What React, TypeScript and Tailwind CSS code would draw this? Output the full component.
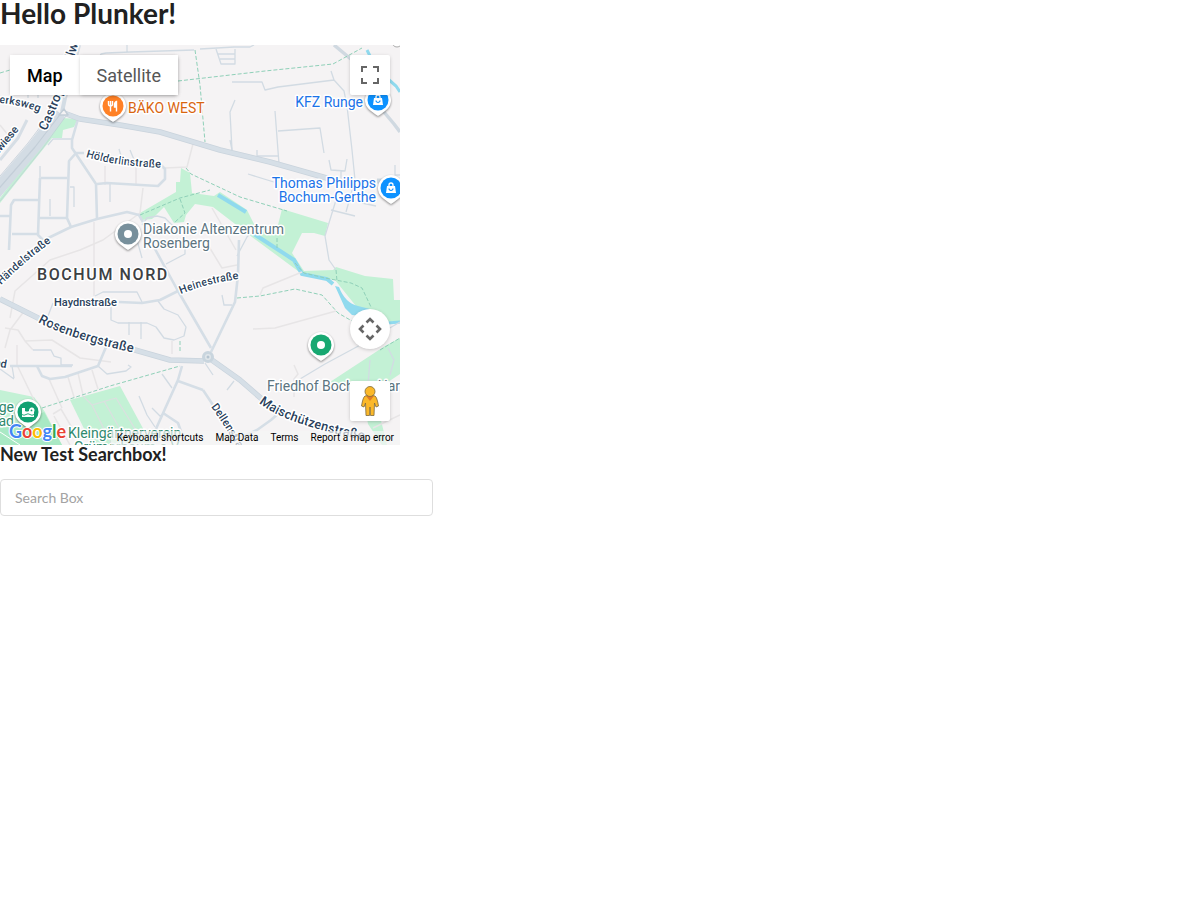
const minorRoads = [
  "M99 58 L101 54 L106 53 L130 52 L194 50 M127 45 V53 M200 49 L234 47 L250 47 L254 45",
  "M216 49 L221 64 H235 V49 M218 54 H235 M220 59 H235",
  "M232 82 H262 L265 90 L278 87 L334 80 L331 71 M334 80 L344 91 L347 106 L352 150 L355 180 L346 212",
  "M235 100 L230 112 L232 150 M275 111 L279 164 M278 131 L320 128 L324 153",
  "M230 140 L232 150 M257 150 V156 H279 M329 160 L331 170 L345 171 L347 159 M341 171 V180",
  "M248 174 L277 183 M336 200 L325 236 L329 260 L336 270 M331 210 L355 216 M395 165 V175 H400 M362 203 L376 206",
  "M28 92 V98 M38 92 V98",
  "M40 166 V178 M50 199 V216 M70 187 H74 V207 M110 184 V202 M119 149 L121 156 M130 150 L135 162",
  "M48 145 L53 139 H72",
  "M95 296 L103 292 H137 L142 302 M53 303 L48 316 M111 304 V320 L118 323 H147 L156 327 L164 338 L174 340 L184 336 L186 327 L178 315 L164 309 L158 301 M129 322 V335 M141 322 V339",
  "M166 264 L185 254 V246 M137 240 L142 258 M237 256 L247 237 L253 230",
  "M222 295 L224 305 H232 M0 369 L14 379 M12 366 L14 378",
  "M33 350 H51 L54 356 L61 358 V365 H73 M98 366 L107 374 L126 371 L131 367 L128 365",
  "M162 374 L172 388 M139 396 L147 415 L155 427 M152 408 L160 416 L165 413",
  "M234 381 L227 390 M205 363 L213 375",
  "M142 225 L147 218 L157 216 L165 218 L177 230 M177 238 V244",
  "M280 391 L325 364 L364 343 L400 322 M368 385 L370 360 M390 375 L394 360 L388 348",
];

const faintRoads = [
  "M25 310 L10 330 L5 348 M5 328 L18 330 L25 341 L33 350 M25 341 L52 340 L80 358 L111 362",
  "M10 318 L15 291 L50 260 L80 250 L103 240 L140 213 L143 188",
  "M94 296 V222 M105 166 V185 M136 165 V186 M165 168 L187 167 L194 140",
  "M17 345 V365 L35 402 M49 379 L62 408 M68 377 L74 397 M78 373 L83 395 M92 370 L98 389",
  "M53 414 L61 409 L82 445 M54 416 L70 445",
  "M212 208 L236 250 M208 245 L222 268 L237 265 M260 295 L263 288 L302 272 M253 329 L275 328 L336 311",
  "M172 341 V354 M294 365 L298 374 L294 379 V397 M373 428 L400 415 M0 125 L12 140",
];

const localRoads = [
  "M78 119 L72 140 V148 L96 184 L97 219",
  "M84 153 H76 L69 161 L67 218 L71 227",
  "M97 184 L107 183 L158 186 L165 179 V169 L160 164",
  "M41 178 H67 M40 178 L38 235 L43 240 M38 218 H67",
  "M38 200 H14 L11 205 L9 250 M0 216 H10 M12 234 H38",
  "M42 241 L71 227 L97 219 L127 212 L139 215 L143 222",
  "M119 302 L142 303 L160 300 L178 291 L180 289",
  "M10 366 H72 M37 366 L42 376 L50 379 L65 377 L98 366 L106 347",
  "M155 249 L178 291 L211 348",
  "M239 240 L238 275 L235 302 L211 352",
  "M182 366 L178 380 L155 431 M178 381 L203 390 M163 413 L178 423 L184 440",
  "M203 390 L213 405 M233 441 L257 430 L271 420 L280 412",
];

const mainRoads = [
  "M64 113 L80 119 L120 125 L160 132 L220 150 L270 162 L330 179",
  "M0 299 L38 318 L90 340 L135 350 L170 360 L204 361",
  "M209 358 L240 380 L263 400 L285 415",
];

const paths = [
  "M0 73 L10 70 M178 81 L265 71 L333 64 L362 48",
  "M195 50 L200 85 L205 142",
  "M42 408 L110 386 L180 366",
  "M186 168 L191 174 L240 197 L287 211",
  "M140 215 L180 198 L210 190 M180 199 L185 213 L175 222",
  "M237 298 L260 296 L295 289 L322 295 L338 313 L352 321",
  "M277 238 V250 M336 270 L337 281 M295 263 L304 273 L325 278 L351 283 L362 288 L371 307",
  "M380 350 L400 338",
  "M180 341 V352",
];

const pins = [
  { x: 113, y: 106, color: "#ff8126", glyph: "food" },
  { x: 378, y: 100, color: "#0d92ff", glyph: "bag" },
  { x: 391, y: 188, color: "#0d92ff", glyph: "bag" },
  { x: 128, y: 234, color: "#78909c", glyph: "dot" },
  { x: 321, y: 345, color: "#18a871", glyph: "dot" },
  { x: 28, y: 412, color: "#12a172", glyph: "swim" },
];

const footerItem = "bg-[#f5f5f5]/70 px-[6px]";

const Glyph = ({ name }: { name: string }) => {
  if (name === "food") {
    return (
      <g fill="none" stroke="#fff" strokeWidth="1.4">
        <path d="M-4.5 -5 V-2 Q-4.5 0 -2.5 0 Q-0.5 0 -0.5 -2 V-5 M-2.5 -5 V5.5" />
        <path d="M3.5 5.5 V-4.5 Q1 -4 1.5 1 H3.5" fill="#fff" />
      </g>
    );
  }
  if (name === "bag") {
    return (
      <g>
        <path d="M-4 -2 H4 L5 5 H-5 Z" fill="#fff" />
        <path d="M-2 -2 V-3 A2 2 0 0 1 2 -3 V-2" fill="none" stroke="#fff" strokeWidth="1.3" />
        <path d="M-2 0.5 A2 2 0 0 0 2 0.5" fill="none" stroke="#0d92ff" strokeWidth="1.2" />
      </g>
    );
  }
  if (name === "swim") {
    return (
      <g>
        <path d="M-6 -4 H-3 V-1 Q-1 0 1 -1 A2.8 2.8 0 1 1 6 0 V5 H-6 Z" fill="#fff" />
        <circle cx="3.5" cy="-1.6" r="0.9" fill="#12a172" />
        <path d="M-6 2.5 Q-4 4 -2 2.5 T2 2.5 T6 2.5" fill="none" stroke="#12a172" strokeWidth="0.9" />
      </g>
    );
  }
  return <circle r="4" fill="#fff" />;
};

const MapCanvas = () => {
  return (
    <svg
      viewBox="0 45 400 400"
      className="block h-full w-full font-['Roboto',sans-serif]"
      role="img"
      aria-label="Map of Bochum Nord"
    >
      <rect y="45" width="400" height="400" fill="#f5f3f4" />

      {/* parks */}
      <g fill="#c3f1d5">
        <path d="M62 118 L78 119 L74 127 L63 130 L62 138 L52 138 L0 203 V198 L40 145 Z" />
        <path d="M181 168 L190 173 L192 193 L214 196 L220 192 L247 210 L256 228 L277 229 L282 209 L328 223 L325 236 L314 233 L302 233 L292 253 L304 271 L333 270 L336 267 L365 276 L393 279 L394 300 L400 300 V323 L368 321 L335 280 L302 274 L252 237 L213 207 L195 204 L186 215 L184 222 L174 223 L164 207 L152 219 L141 220 L140 213 L176 192 V182 H180 Z" />
        <path d="M70 400 L120 386 L152 445 H92 Z" />
        <path d="M330 382 L385 346 L400 338 V374 L388 382 L376 400 L387 445 H382 L368 424 L362 391 Z" />
        <path d="M0 390 L34 397 L45 412 L62 445 H0 Z" />
      </g>
      <path d="M0 428 L18 424 L44 412 L62 445 H0 Z" fill="#a9e9c4" />
      <path d="M0 432 L20 445" fill="none" stroke="#fff" />

      {/* water */}
      <g fill="none" stroke="#90daee">
        <path d="M218 195 L246 212" strokeWidth="4" />
        <path d="M254 234 L294 260 L302 274 L327 279 L333 284" strokeWidth="4" />
        <path d="M367 50 L371 58 M388 79 L396 86 L400 92 M388 323 L400 322" strokeWidth="3" />
      </g>
      <path d="M335 286 L339 287 Q345 303 358 306 L370 309 L362 316 L352 315 L345 308 Z" fill="#90daee" />

      {/* streets */}
      <g fill="none" strokeLinejoin="round">
        <g stroke="#e7e5e6" strokeWidth="1.5">
          {faintRoads.map((d) => (
            <path key={d} d={d} />
          ))}
        </g>
        <g stroke="#d2dbe3" strokeWidth="1.3">
          {minorRoads.map((d) => (
            <path key={d} d={d} />
          ))}
        </g>
        <g stroke="#d5dee6" strokeWidth="2.6">
          {localRoads.map((d) => (
            <path key={d} d={d} />
          ))}
        </g>
        <path d="M334 45 L352 60 M384 112 L394 124 L400 132" stroke="#d0d9e1" strokeWidth="3.5" />
        <path d="M79 45 L65 98 L62 112" stroke="#d3dce4" strokeWidth="4" />
        <path d="M27 120 L18 138 L0 160" stroke="#d6dee5" strokeWidth="3" />
        <path d="M60 113 L34 147 L-5 193" stroke="#d3dce4" strokeWidth="13" />
        <path d="M62 112 L35 147 L-5 193" stroke="#c3ced8" strokeWidth="1.2" />
        <path d="M66 116 L42 149 L0 201 M53 110 L28 143 L-5 182" stroke="#c3ced8" strokeWidth="0.8" />
        <g stroke="#c9d3dc" strokeWidth="5.6">
          {mainRoads.map((d) => (
            <path key={d} d={d} />
          ))}
        </g>
        <g stroke="#d6dfe7" strokeWidth="4.2">
          {mainRoads.map((d) => (
            <path key={d} d={d} />
          ))}
        </g>
        <path d="M377 181 H400" stroke="#ccd8e1" strokeWidth="5" />
        <path d="M83 396 L92 405 L116 398 L140 437 M92 405 L112 445 M104 401 L121 431" stroke="#dcdfe0" strokeWidth="1.2" />
        <circle cx="208" cy="357" r="4.5" fill="#e0e6ea" stroke="#c9d5de" strokeWidth="3" />
        <circle cx="208" cy="357" r="1.5" fill="#b5c4d0" />
        <path d="M59 115 L64 109 L68 115 Z" fill="#f5f3f4" stroke="#c3ced8" strokeWidth="1.5" />
        <g stroke="#8fd0b8" strokeDasharray="4 2">
          {paths.map((d) => (
            <path key={d} d={d} />
          ))}
        </g>
      </g>
      <circle cx="397" cy="42" r="5" fill="#fff" stroke="#aaa" />

      {/* street names */}
      <defs>
        <path id="werksweg" d="M-9 103 Q16 102 46 115" />
        <path id="hoelderlin" d="M86 157 Q118 167 170 168" />
        <path id="heine" d="M181 294 Q207 283 245 278" />
        <path id="rosenberg" d="M38 322 Q68 339 140 354" />
        <path id="maischuetzen" d="M259 403 Q284 424 364 440" />
        <path id="haendel" d="M1 285 Q24 262 54 240" />
        <path id="castroper" d="M46 131 Q62 100 77 48 L80 38" />
        <path id="dellen" d="M211 407 Q224 424 238 449" />
      </defs>
      <g
        fill="#2a3f5b"
        stroke="#fff"
        strokeWidth="3"
        strokeLinejoin="round"
        paintOrder="stroke"
        className="text-[11px] font-medium"
      >
        <text><textPath href="#werksweg">werksweg</textPath></text>
        <text><textPath href="#hoelderlin">Hölderlinstraße</textPath></text>
        <text><textPath href="#heine">Heinestraße</textPath></text>
        <text><textPath href="#haendel">Händelstraße</textPath></text>
        <text><textPath href="#dellen">Dellenstraße</textPath></text>
        <text x="54" y="306">Haydnstraße</text>
        <text transform="translate(-3 156) rotate(-50)">kwiese</text>
        <text transform="translate(-6 366) rotate(10)">nd</text>
        <g className="text-[13px]">
          <text><textPath href="#castroper">Castroper Hellweg</textPath></text>
          <text><textPath href="#rosenberg">Rosenbergstraße</textPath></text>
          <text><textPath href="#maischuetzen">Maischützenstraße</textPath></text>
        </g>
      </g>

      {/* places */}
      <g stroke="#fff" strokeWidth="3" strokeLinejoin="round" paintOrder="stroke" className="text-[14px]">
        <text x="37" y="280" fill="#3c4043" className="text-[16px] font-medium tracking-widest">BOCHUM NORD</text>
        <text x="128" y="113" fill="#d9650f">BÄKO WEST</text>
        <g fill="#1a73e8" textAnchor="end">
          <text x="363" y="107">KFZ Runge</text>
          <text x="376" y="188">Thomas Philipps</text>
          <text x="376" y="202">Bochum-Gerthe</text>
        </g>
        <g fill="#5b747f">
          <text x="143" y="234">Diakonie Altenzentrum</text>
          <text x="143" y="248">Rosenberg</text>
          <text x="267" y="391">Friedhof Bochum-Har</text>
        </g>
        <g fill="#2f8a6d">
          <text x="14" y="412" textAnchor="end">ge</text>
          <text x="14" y="426" textAnchor="end">ad</text>
          <text x="68" y="438">Kleingärtnerverein</text>
          <text x="74" y="452">Grümerbaum e.V.</text>
        </g>
      </g>

      {pins.map((pin) => (
        <g key={`${pin.x}-${pin.y}`} transform={`translate(${pin.x} ${pin.y})`}>
          <path
            d="M0 16 Q-2 15 -7 11 A13 13 0 1 1 7 11 Q2 15 0 16 Z"
            fill="#fff"
            className="drop-shadow-[0_1px_1px_rgba(0,0,0,0.45)]"
          />
          <circle r="10.5" fill={pin.color} />
          <Glyph name={pin.glyph} />
        </g>
      ))}

      <text
        x="9"
        y="438"
        stroke="#fff"
        strokeWidth="2"
        paintOrder="stroke"
        className="font-['Lato',sans-serif] text-[18px] font-bold"
      >
        <tspan fill="#4285f4">G</tspan>
        <tspan fill="#ea4335">o</tspan>
        <tspan fill="#fbbc04">o</tspan>
        <tspan fill="#4285f4">g</tspan>
        <tspan fill="#34a853">l</tspan>
        <tspan fill="#ea4335">e</tspan>
      </text>
    </svg>
  );
};

const GoogleMap = () => {
  return (
    <div className="relative h-[400px] w-[400px] max-w-full overflow-hidden font-['Roboto',sans-serif]">
      <MapCanvas />

      <div className="absolute left-[10px] top-[10px] flex h-10 bg-white text-[18px] shadow-[0_1px_4px_-1px_rgba(0,0,0,0.3)]">
        <button type="button" className="px-[17px] font-medium text-black">
          Map
        </button>
        <button type="button" className="px-[17px] text-[#565656] shadow-[0_1px_4px_-1px_rgba(0,0,0,0.3)]">
          Satellite
        </button>
      </div>

      <button
        type="button"
        aria-label="Toggle fullscreen view"
        className="absolute right-[10px] top-[10px] flex size-10 items-center justify-center rounded-xs bg-white shadow-[0_1px_4px_-1px_rgba(0,0,0,0.3)]"
      >
        <svg viewBox="0 0 18 18" className="size-[18px]" fill="#666">
          <path d="M0 0v6h2V2h4V0H0zm16 0h-4v2h4v4h2V0h-2zm0 16h-4v2h6v-6h-2v4zM2 12H0v6h6v-2H2v-4z" />
        </svg>
      </button>

      <div className="absolute bottom-6 right-[10px] flex flex-col gap-8">
        <button
          type="button"
          aria-label="Map camera controls"
          className="flex size-10 items-center justify-center rounded-full bg-white shadow-[0_1px_4px_-1px_rgba(0,0,0,0.3)]"
        >
          <svg viewBox="0 0 24 24" className="size-6" fill="none" stroke="#666" strokeWidth="2.6">
            <path d="M8.5 5.5 L12 2 L15.5 5.5 M8.5 18.5 L12 22 L15.5 18.5 M5.5 8.5 L2 12 L5.5 15.5 M18.5 8.5 L22 12 L18.5 15.5" />
          </svg>
        </button>
        <button
          type="button"
          aria-label="Drag Pegman onto the map to open Street View"
          className="flex size-10 items-center justify-center rounded-xs bg-white shadow-[0_1px_4px_-1px_rgba(0,0,0,0.3)]"
        >
          <svg viewBox="0 0 20 32" className="h-8 w-5" fill="#fbb829" stroke="#7d6a3d" strokeWidth="0.8">
            <path d="M5 11 Q10 9 15 11 Q17 12 18.5 21 L16 22 L14.5 18 L14 30.5 H10.5 L10 22 L9.5 30.5 H6 L5.5 18 L4 22 L1.5 21 Q3 12 5 11 Z" />
            <path d="M6 11 L10 16 L14 11 Z" fill="#e07b25" stroke="none" />
            <circle cx="10" cy="6.5" r="5" />
          </svg>
        </button>
      </div>

      <div className="absolute bottom-0 right-0 flex text-[10px] leading-[14px] text-black">
        <button type="button" className={footerItem}>
          Keyboard shortcuts
        </button>
        <button type="button" className={footerItem}>
          Map Data
        </button>
        <a href="#terms" className={footerItem}>
          Terms
        </a>
        <a href="#report" className={footerItem}>
          Report a map error
        </a>
      </div>
    </div>
  );
};

const App = () => {
  return (
    <div className="min-h-screen bg-white font-['Lato',sans-serif] text-[#212121]">
      <h1 className="mb-[19px] text-[28px] font-bold leading-[26px]">Hello Plunker!</h1>
      <GoogleMap />
      <label htmlFor="search" className="mb-4 block text-[18px] font-bold leading-[18px]">
        New Test Searchbox!
      </label>
      <input
        id="search"
        type="text"
        placeholder="Search Box"
        className="block h-[37px] w-[433px] max-w-full rounded border border-[#dedede] px-[14px] text-[14px] placeholder:text-[#a3a3a3]"
      />
    </div>
  );
};

export default App;
